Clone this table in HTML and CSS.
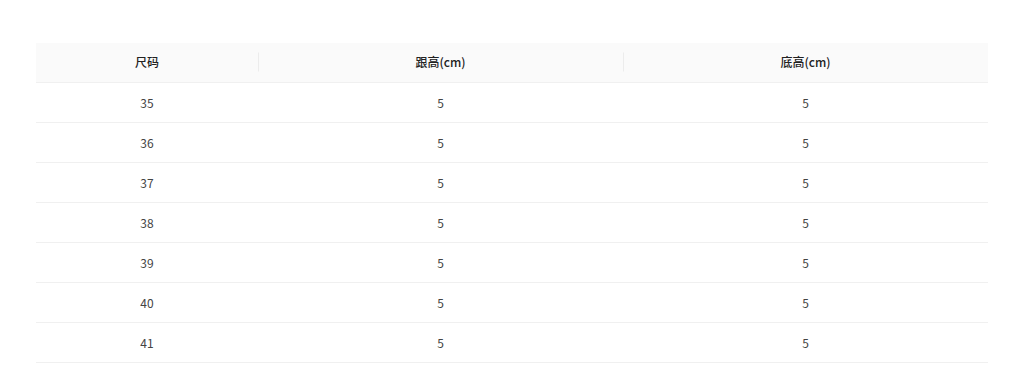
FILE: index.html
```html
<!DOCTYPE html>
<html lang="zh-CN">
<head>
<meta charset="utf-8">
<link rel="stylesheet" href="styles.css">
</head>
<body>
<div class="page">
  <table class="size-table">
    <colgroup>
      <col class="c1"><col class="c2"><col class="c3">
    </colgroup>
    <thead>
      <tr><th>尺码</th><th class="sep">跟高(cm)</th><th class="sep">底高(cm)</th></tr>
    </thead>
    <tbody>
      <tr><td>35</td><td>5</td><td>5</td></tr>
      <tr><td>36</td><td>5</td><td>5</td></tr>
      <tr><td>37</td><td>5</td><td>5</td></tr>
      <tr><td>38</td><td>5</td><td>5</td></tr>
      <tr><td>39</td><td>5</td><td>5</td></tr>
      <tr><td>40</td><td>5</td><td>5</td></tr>
      <tr><td>41</td><td>5</td><td>5</td></tr>
    </tbody>
  </table>
</div>
</body>
</html>
```
FILE: styles.css
```css
html, body {
  margin: 0;
  padding: 0;
  background: #fff;
}
body {
  font-family: "Noto Sans CJK SC", "Noto Sans", sans-serif;
  font-size: 12px;
  color: #333;
}
.page {
  padding: 43px 36px 0;
}
.size-table {
  width: 952px;
  border-collapse: collapse;
  table-layout: fixed;
}
.c1 { width: 222px; }
.c2 { width: 365px; }
.c3 { width: 365px; }
.size-table th {
  position: relative;
  height: 39px;
  padding: 0 0 1px;
  box-sizing: border-box;
  background: #fafafa;
  border-bottom: 1px solid #f0f0f0;
  font-weight: 500;
  color: #222;
  text-align: center;
  font-size: 12px;
}
.size-table th.sep::before {
  content: "";
  position: absolute;
  left: 0;
  top: 50%;
  width: 1px;
  height: 19px;
  transform: translateY(-50%);
  background: #ececec;
}
.size-table td {
  height: 39px;
  padding: 0;
  border-bottom: 1px solid #f0f0f0;
  text-align: center;
  color: #444;
  font-size: 12px;
}
```
